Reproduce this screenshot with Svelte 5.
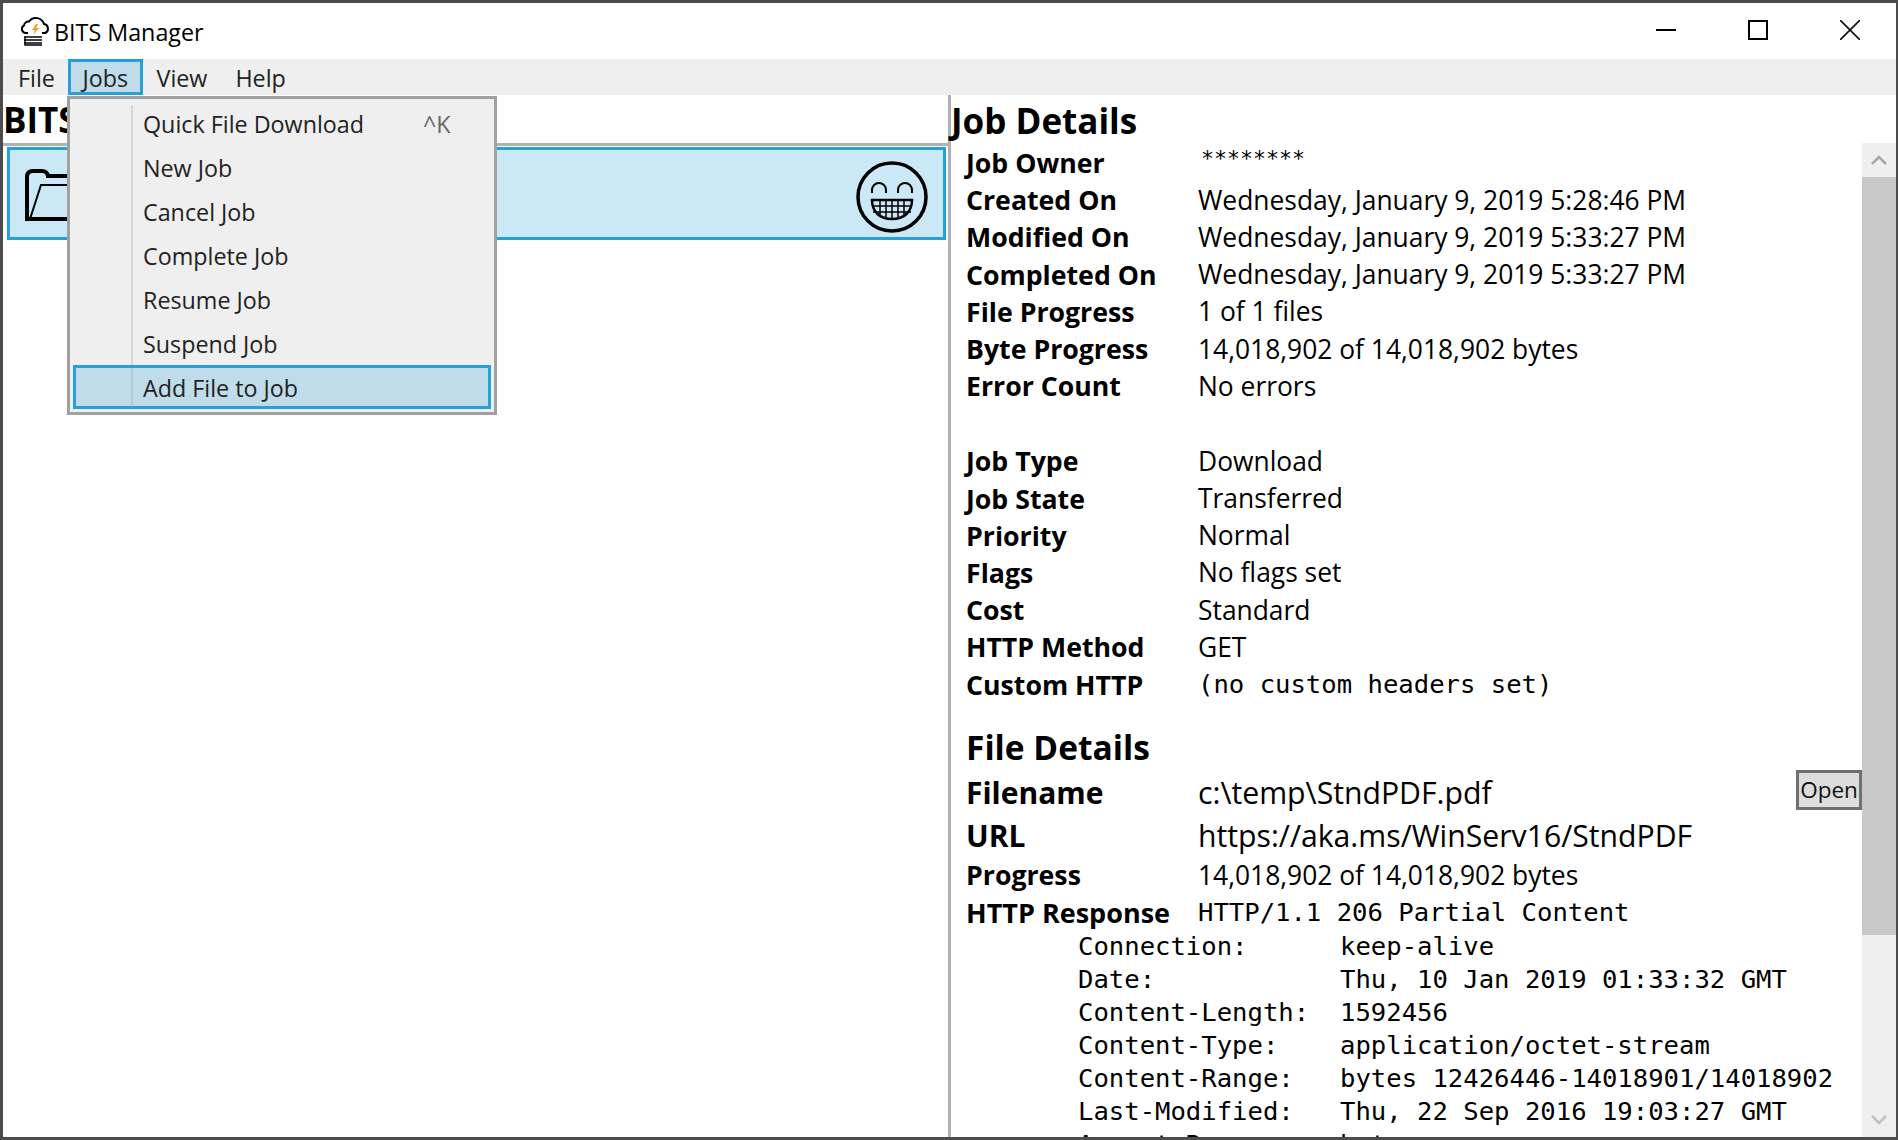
<script>
  const jobLines = [
    ["Job Owner", "********", "owner"],
    ["Created On", "Wednesday, January 9, 2019 5:28:46 PM"],
    ["Modified On", "Wednesday, January 9, 2019 5:33:27 PM"],
    ["Completed On", "Wednesday, January 9, 2019 5:33:27 PM"],
    ["File Progress", "1 of 1 files"],
    ["Byte Progress", "14,018,902 of 14,018,902 bytes"],
    ["Error Count", "No errors"],
  ];
  const jobMeta = [
    ["Job Type", "Download"],
    ["Job State", "Transferred"],
    ["Priority", "Normal"],
    ["Flags", "No flags set"],
    ["Cost", "Standard"],
    ["HTTP Method", "GET"],
    ["Custom HTTP", "(no custom headers set)", "mono"],
  ];
  const headers = [
    ["Connection:", "keep-alive"],
    ["Date:", "Thu, 10 Jan 2019 01:33:32 GMT"],
    ["Content-Length:", "1592456"],
    ["Content-Type:", "application/octet-stream"],
    ["Content-Range:", "bytes 12426446-14018901/14018902"],
    ["Last-Modified:", "Thu, 22 Sep 2016 19:03:27 GMT"],
    ["Accept-Ranges:", "bytes"],
  ];
  const menu = ["Quick File Download", "New Job", "Cancel Job", "Complete Job", "Resume Job", "Suspend Job", "Add File to Job"];
</script>

<div class="win">
  <header class="title">
    <svg class="appicon" width="28" height="32" viewBox="0 0 28 32">
      <path d="M7 18H5a4 4 0 0 1-2-7.500 4.500 4.500 0 0 1 5-4 8.500 8.500 0 0 1 15 2.500 4.700 4.700 0 0 1 1 9h-3" fill="#fff" stroke="#000" stroke-width="2"/>
      <path d="M15 9l-4 6h3l-2 5 6-7h-3l2-4z" fill="#f0a020"/>
      <path d="M3 22h18M3 25h18M3 28h18M4 22v8h17" fill="none" stroke="#000" stroke-width="1.400"/>
    </svg>
    <span class="apptitle">BITS Manager</span>
    <div class="caps">
      <svg width="20" height="20" viewBox="0 0 20 20"><path d="M0 10h20" stroke="#000" stroke-width="2"/></svg>
      <svg width="20" height="20" viewBox="0 0 20 20"><rect x="1" y="1" width="18" height="18" fill="none" stroke="#000" stroke-width="2"/></svg>
      <svg width="20" height="20" viewBox="0 0 20 20"><path d="M0 0l20 20M20 0L0 20" stroke="#111" stroke-width="1.700"/></svg>
    </div>
  </header>

  <nav class="menubar">
    <span class="mi">File</span>
    <span class="mi open">Jobs</span>
    <span class="mi">View</span>
    <span class="mi">Help</span>
  </nav>

  <main class="body">
    <section class="left">
      <h1 class="lefthead">BITS Jobs</h1>
      <div class="list">
        <div class="job">
          <svg class="folder" width="60" height="54" viewBox="0 0 60 54">
            <path d="M2 52V8q0-6 6-6h9q5 0 6 5h37" fill="none" stroke="#000" stroke-width="4"/>
            <path d="M5 50L16 16h44" fill="none" stroke="#000" stroke-width="2"/>
            <path d="M0 50h60" fill="none" stroke="#000" stroke-width="4"/>
          </svg>
          <svg class="smile" width="74" height="74" viewBox="0 0 74 74">
            <circle cx="37" cy="37" r="34" fill="none" stroke="#000" stroke-width="3.500"/>
            <path d="M17 33v-3a7 7 0 0 1 14 0v3M43 33v-3a7 7 0 0 1 14 0v3" fill="none" stroke="#000" stroke-width="2"/>
            <path d="M17 40h40c0 12-8 19-20 19s-20-7-20-19z" fill="none" stroke="#000" stroke-width="2.500"/>
            <path d="M17 46h40M18 52h38M25 40v16M31 40v18M37 40v19M43 40v18M49 40v16" fill="none" stroke="#000" stroke-width="1.500"/>
          </svg>
        </div>
      </div>
    </section>

    <section class="right">
      <h1 class="righthead">Job Details</h1>
      <div class="scroller">
        <div class="details">
          <div class="block">
            {#each jobLines as [k, v, kind]}
              <div class="row"><b>{k}</b><span class={kind}>{v}</span></div>
            {/each}
          </div>
          <div class="block second">
            {#each jobMeta as [k, v, kind]}
              <div class="row"><b>{k}</b><span class={kind}>{v}</span></div>
            {/each}
          </div>
          <h2>File Details</h2>
          <div class="row big"><b>Filename</b><span>c:\temp\StndPDF.pdf</span><button class="openbtn">Open</button></div>
          <div class="row big"><b>URL</b><span>https://aka.ms/WinServ16/StndPDF</span></div>
          <div class="row prog"><b>Progress</b><span>14,018,902 of 14,018,902 bytes</span></div>
          <div class="row resp"><b>HTTP Response</b><span class="mono">HTTP/1.1 206 Partial Content</span></div>
          <div class="headers">
            {#each headers as [k, v]}
              <div class="hdr"><span>{k}</span><span>{v}</span></div>
            {/each}
          </div>
        </div>
        <div class="scrollbar">
          <svg class="arr" width="16" height="10" viewBox="0 0 16 10"><path d="M1 9l7-7 7 7" fill="none" stroke="#a8a8a8" stroke-width="2.500"/></svg>
          <div class="thumb"></div>
          <svg class="arr down" width="16" height="10" viewBox="0 0 16 10"><path d="M1 1l7 7 7-7" fill="none" stroke="#c0c0c0" stroke-width="2.500"/></svg>
        </div>
      </div>
    </section>
  </main>

  <div class="dropdown">
    {#each menu as m, i}
      <div class="drow" class:hot={i === 6}>
        <span>{m}</span>
        {#if i === 0}<span class="key">^K</span>{/if}
      </div>
    {/each}
  </div>
</div>

<style>
  :global(body) { margin: 0; background: #fff; }
  .win {
    width: 1898px; height: 1140px; box-sizing: border-box; position: relative;
    border: solid #4c4c4c; border-width: 3px 2px 3px 3px;
    display: flex; flex-direction: column; overflow: hidden;
    background: #fff; color: #000;
    font-family: "Open Sans", "Noto Sans", sans-serif;
  }
  .title { height: 56px; flex: none; display: flex; align-items: center; padding-left: 18px; }
  .appicon { margin-right: 5px; }
  .apptitle { font-size: 23.300px; padding-top: 1px; }
  .caps { margin-left: auto; display: flex; gap: 72px; margin-right: 36px; margin-top: -2px; }
  .menubar { height: 36px; flex: none; background: #efefef; display: flex; font-size: 23.300px; color: #222; }
  .mi { padding: 0 14px; line-height: 38px; box-sizing: border-box; }
  .mi:first-child { padding: 0 13px 0 15px; }
  .mi.open { background: #c0dcea; border: 3px solid #26a0da; padding: 0 11.500px; line-height: 32px; height: 36px; }
  .body { flex: 1; display: flex; min-height: 0; }
  .left { width: 945px; flex: none; border-right: 3px solid #b0b0b8; display: flex; flex-direction: column; }
  .lefthead { margin: 0; font-size: 35px; line-height: 50px; font-weight: 700; height: 48px; }
  .list { border-top: 3px solid #b0b0b8; padding: 1px 2px 0 4px; flex: 1; }
  .job {
    height: 93px; box-sizing: border-box; border: 3px solid #26a0da; background: #cbe8f6;
    display: flex; align-items: center; justify-content: space-between; padding: 0 14px 0 15px;
  }
  .folder { margin-top: 4px; }
  .smile { margin-top: 7px; }
  .right { flex: 1; display: flex; flex-direction: column; min-width: 0; }
  .righthead { margin: 0; font-size: 35px; line-height: 52px; height: 48px; font-weight: 700; }
  .scroller { flex: 1; display: flex; min-height: 0; }
  .details { flex: 1; min-width: 0; padding: 1px 0 0 15px; overflow: hidden; }
  .second { margin-top: 38px; }
  .row { display: flex; align-items: center; height: 37.200px; font-size: 26.400px; white-space: nowrap; }
  .row b { width: 232px; flex: none; font-weight: 700; font-size: 26.700px; }
  .mono, .hdr { font-family: "DejaVu Sans Mono", "Liberation Mono", monospace; font-size: 25.600px; }
  .owner { font-family: "DejaVu Sans Mono", monospace; font-size: 21.600px; position: relative; top: -4px; padding-left: 3px; }
  h2 { margin: 19px 0 0; font-size: 33.500px; line-height: 50px; font-weight: 700; }
  .row.big { height: 43px; font-size: 30.200px; position: relative; margin-top: -1px; }
  .row.big + .row.big { margin-top: 0; }
  .row.big b { font-size: 30px; }
  .openbtn {
    position: absolute; right: 0; top: -1px; width: 66px; height: 40px; padding: 0;
    background: #ddd; border: 3px solid #707070; font: 22.500px "Open Sans", sans-serif; color: #111;
  }
  .row.prog { height: 38px; margin-top: -1px; }
  .row.resp { height: 37px; }
  .row.resp b { font-size: 27px; }
  .headers { padding-left: 112px; margin-top: -1px; }
  .hdr { display: flex; height: 33px; line-height: 33px; white-space: nowrap; }
  .hdr span:first-child { width: 262px; flex: none; }
  .scrollbar { width: 34px; flex: none; background: #efefef; display: flex; flex-direction: column; align-items: center; }
  .arr { margin-top: 12px; height: 10px; flex: none; }
  .thumb { align-self: stretch; height: 758px; background: #c8c8c8; margin-top: 12px; }
  .arr.down { margin-top: auto; margin-bottom: 12px; }
  .dropdown {
    position: absolute; left: 64px; top: 93px; width: 430px; height: 319px; box-sizing: border-box;
    background: #efefef; border: 3px solid #a0a0a0; padding: 2px 3px 0 3px; color: #222; font-size: 23.300px;
  }
  .dropdown::before { content: ""; position: absolute; left: 61px; top: 6px; width: 2px; height: 300px; background: #d7d7d7; }
  .drow { height: 44px; line-height: 46px; padding-left: 70px; display: flex; position: relative; box-sizing: border-box; }
  .drow.hot { background: #c0dcea; border: 3px solid #26a0da; padding-left: 67px; line-height: 40px; }
  .drow.hot::before { content: ""; position: absolute; left: 55px; top: 0; bottom: 1px; width: 2px; background: #aecbd9; }
  .key { position: absolute; left: 350px; color: #666; }
</style>
